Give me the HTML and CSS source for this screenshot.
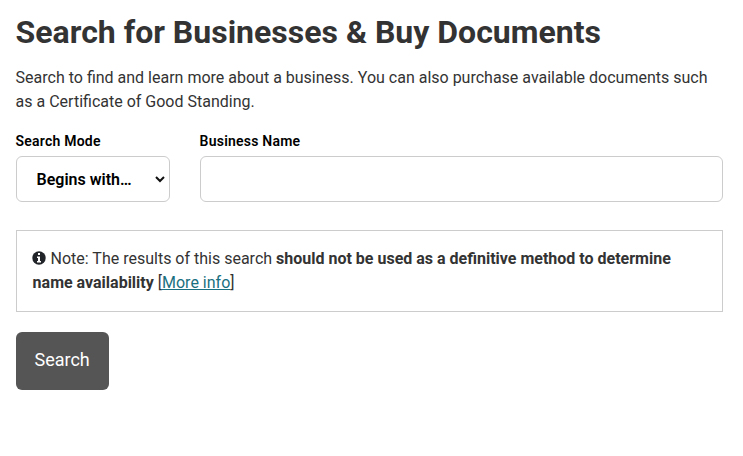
FILE: index.html
```html
<!DOCTYPE html>
<html lang="en">
<head>
<meta charset="utf-8">
<title>Business Search</title>
<link rel="stylesheet" href="styles.css">
</head>
<body>
<main>
  <h1>Search for Businesses &amp; Buy Documents</h1>
  <p class="intro">Search to find and learn more about a business. You can also purchase available documents such as a Certificate of Good Standing.</p>
  <form>
    <div class="fields">
      <div class="field">
        <label for="mode">Search Mode</label>
        <div class="select-wrap">
          <select id="mode" class="control"><option>Begins with…</option></select>
          <svg class="chevron" width="10" height="7" viewBox="0 0 10 7"><path d="M1 1l4 4 4-4" fill="none" stroke="#111" stroke-width="2"/></svg>
        </div>
      </div>
      <div class="field">
        <label for="name">Business Name</label>
        <input id="name" class="control" type="text">
      </div>
    </div>
    <div class="note"><svg class="info" width="14" height="14" viewBox="0 0 14 14"><circle cx="7" cy="7" r="6.700" fill="#212529"/><path d="M6 2h2v2H6zM5 5.500h3v4.500h1v1.500H5V10h1V7H5z" fill="#fff"/></svg> Note: The results of this search <strong>should not be used as a definitive method to determine name availability</strong> [<a href="#">More info</a>]</div>
    <button type="button">Search</button>
  </form>
</main>
</body>
</html>
```
FILE: styles.css
```css
* { box-sizing: border-box; }
body { margin: 0; background: #fff; color: #333; font: 16px/24px Roboto, sans-serif; }
main { padding: 12px 20px 0 15.6px; }
h1 { margin: 0 0 14px; font-size: 32px; line-height: 40px; font-weight: 700; }
.intro { margin: 0 0 17px; }
.fields { display: grid; grid-template-columns: 154px 1fr; column-gap: 30px; }
label { display: block; height: 25px; font-size: 14px; line-height: 20px; font-weight: 600; letter-spacing: 0.22px; color: #000; }
.control { display: block; width: 100%; height: 46px; border: 1px solid #ccc; border-radius: 6px; background: #fff; }
.select-wrap { position: relative; }
select { appearance: none; padding: 0 20px; font: 600 16px Roboto, sans-serif; color: #000; }
.chevron { position: absolute; right: 5px; top: 20px; }
.note { margin: 28px 0 20px; padding: 16px; height: 82px; border: 1px solid #ccc; }
.info { margin: 0 0.300px 0 -0.300px; vertical-align: -1px; }
a { color: #1a7080; }
button { width: 93px; height: 58px; padding: 0 0 3px; border: 0; border-radius: 6px; background: #555; color: #fff; font: 18px Roboto, sans-serif; }
```
